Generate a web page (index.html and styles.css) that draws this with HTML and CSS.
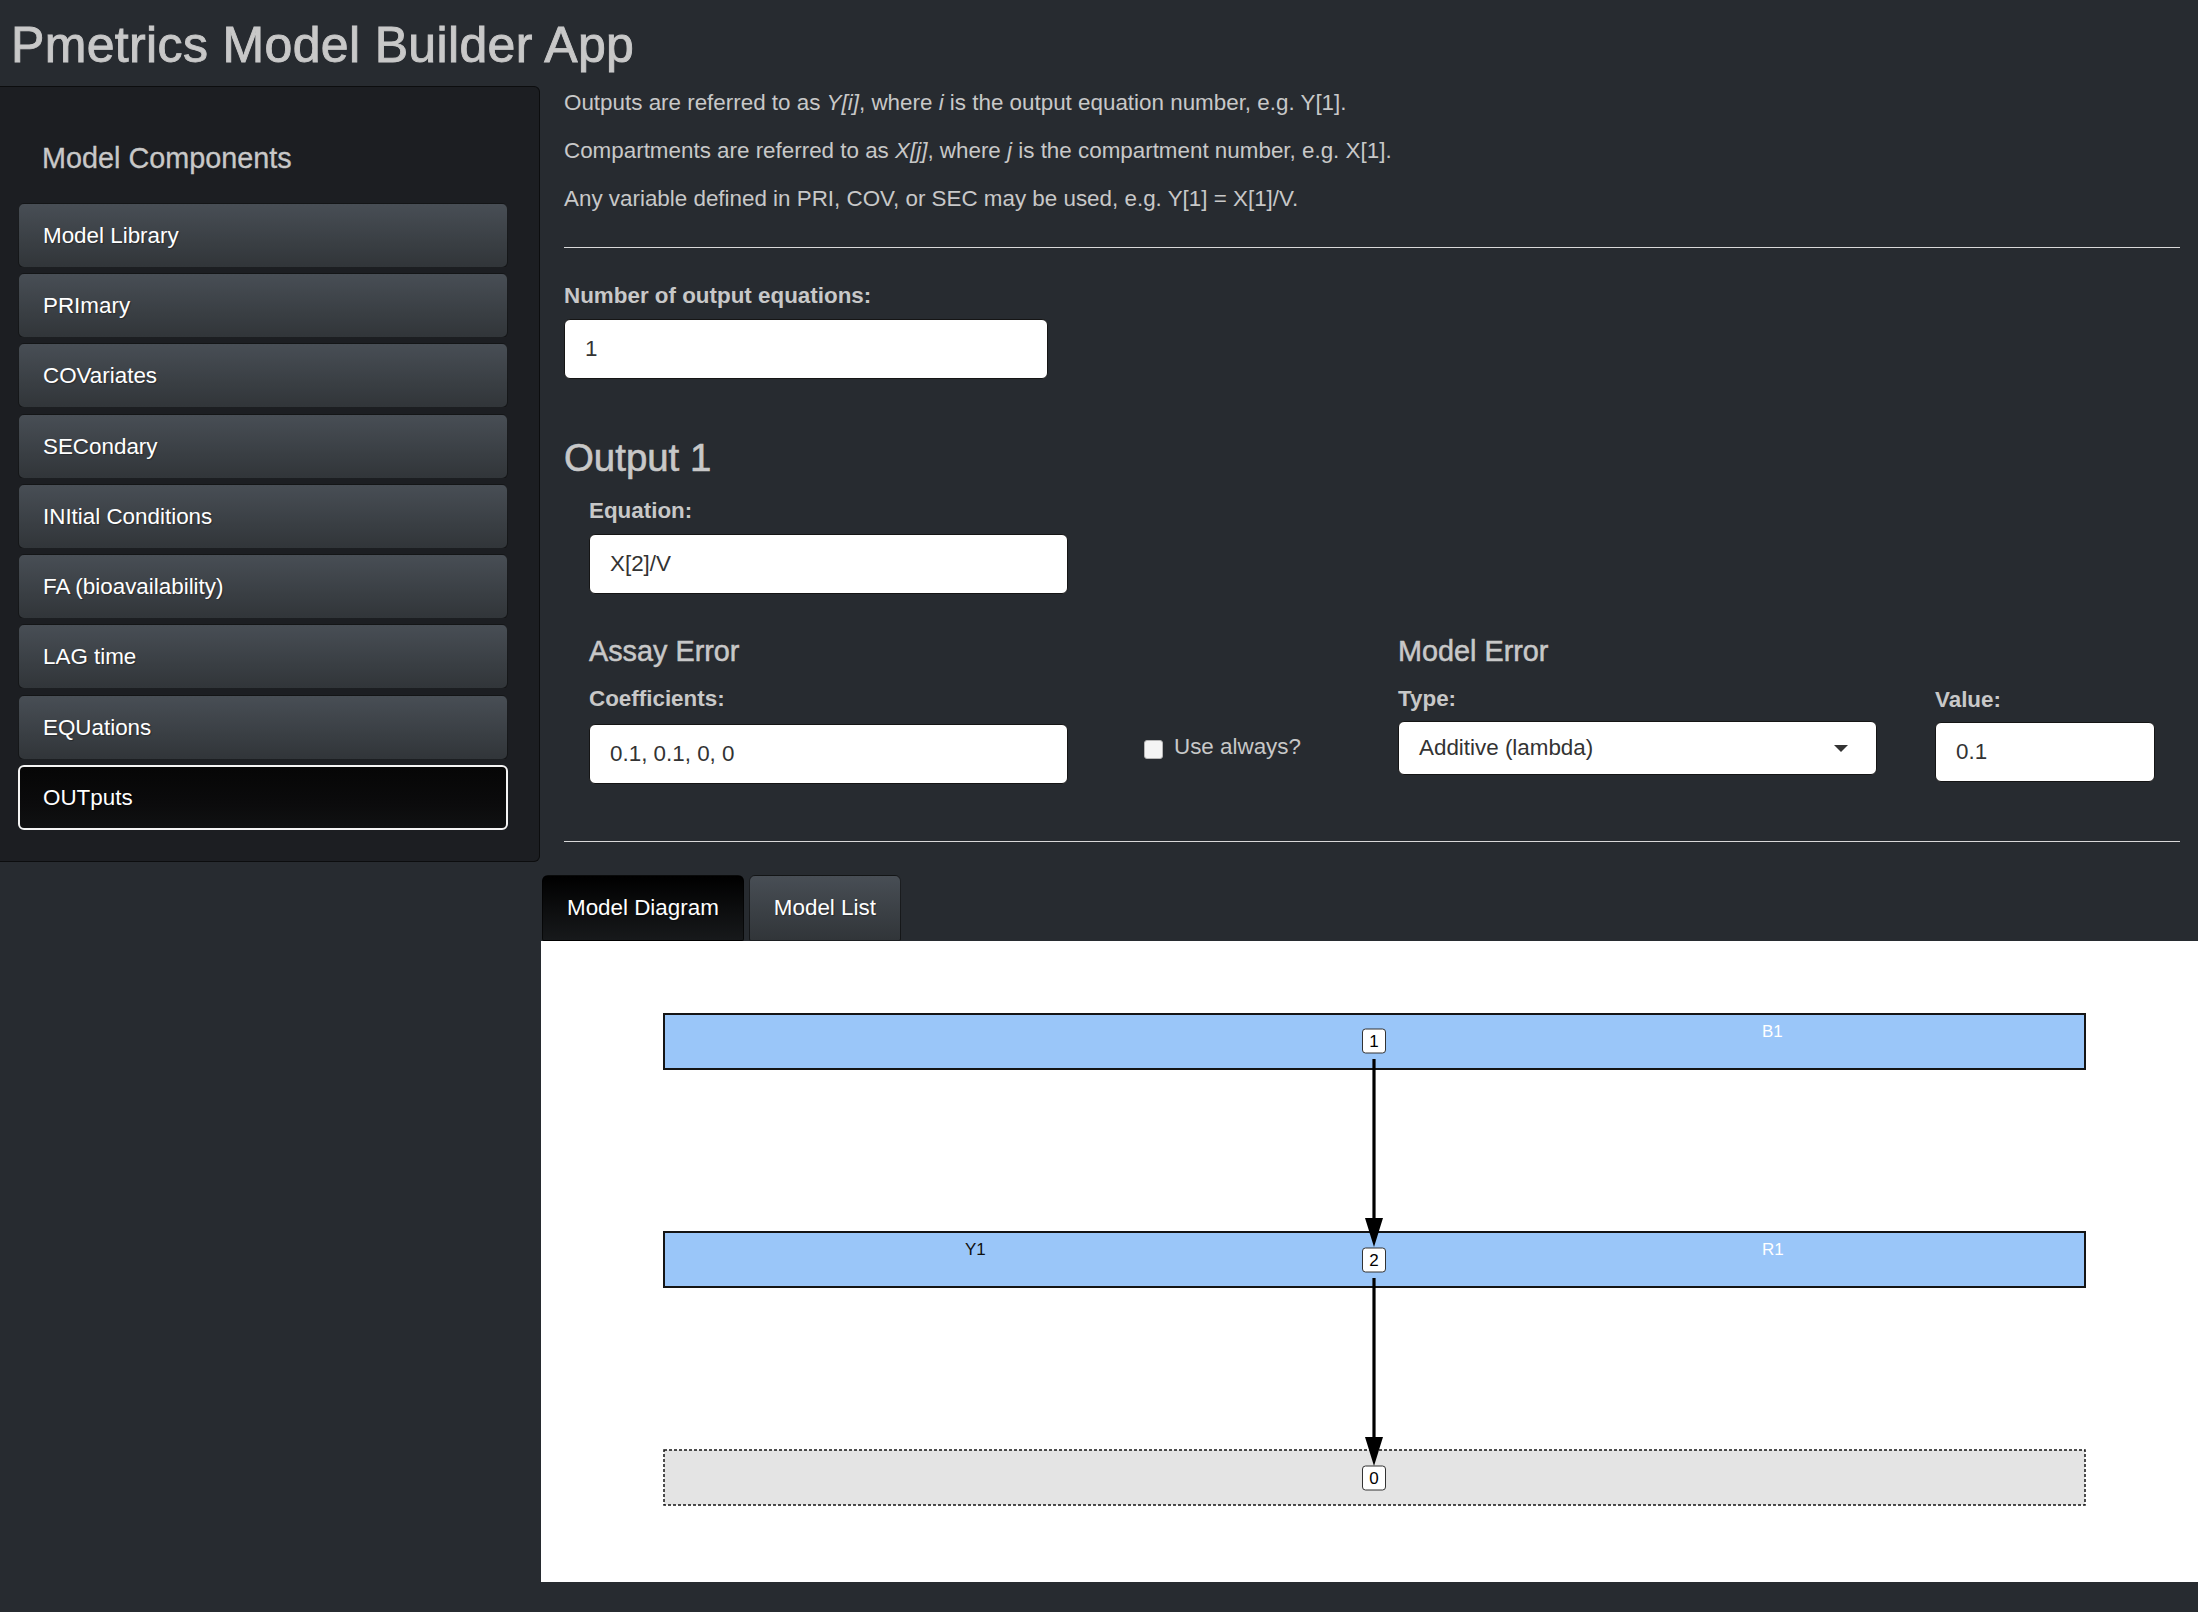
FILE: index.html
```html
<!DOCTYPE html>
<html lang="en">
<head>
<meta charset="utf-8">
<title>Pmetrics Model Builder App</title>
<link rel="stylesheet" href="styles.css">
</head>
<body>
<h1 class="title">Pmetrics Model Builder App</h1>
<div class="layout">
  <aside class="well">
    <h4 class="well-title">Model Components</h4>
    <div class="nav-buttons">
      <div class="btn">Model Library</div>
      <div class="btn">PRImary</div>
      <div class="btn">COVariates</div>
      <div class="btn">SECondary</div>
      <div class="btn">INItial Conditions</div>
      <div class="btn">FA (bioavailability)</div>
      <div class="btn">LAG time</div>
      <div class="btn">EQUations</div>
      <div class="btn btn-active">OUTputs</div>
    </div>
  </aside>
  <main class="main">
    <div class="content">
      <p>Outputs are referred to as <em>Y[i]</em>, where <em>i</em> is the output equation number, e.g. Y[1].</p>
      <p>Compartments are referred to as <em>X[j]</em>, where <em>j</em> is the compartment number, e.g. X[1].</p>
      <p>Any variable defined in PRI, COV, or SEC may be used, e.g. Y[1] = X[1]/V.</p>
      <hr class="hr1">
      <div class="form-group">
        <label class="ctl">Number of output equations:</label>
        <div class="input w-num">1</div>
      </div>
      <h3 class="out-title">Output 1</h3>
      <div class="output">
        <label class="ctl">Equation:</label>
        <div class="input w-eq">X[2]/V</div>
        <div class="error-grid">
          <div class="col">
            <h4 class="sub">Assay Error</h4>
            <label class="ctl ctl-lg">Coefficients:</label>
            <div class="input w-eq">0.1, 0.1, 0, 0</div>
          </div>
          <div class="col check-col">
            <label class="checkbox"><span class="cb"></span>Use always?</label>
          </div>
          <div class="col">
            <h4 class="sub">Model Error</h4>
            <label class="ctl ctl-type">Type:</label>
            <div class="select w-eq"><span>Additive (lambda)</span><span class="caret"></span></div>
          </div>
          <div class="col value-col">
            <label class="ctl ctl-type">Value:</label>
            <div class="input w-val">0.1</div>
          </div>
        </div>
      </div>
      <hr class="hr2">
    </div>
    <div class="tabs">
      <div class="tab-nav">
        <div class="tab tab-active">Model Diagram</div>
        <div class="tab">Model List</div>
      </div>
      <div class="tab-panel">
        <svg class="diagram" width="1657" height="641" viewBox="0 0 1657 641">
          <rect x="123" y="73" width="1421" height="55" fill="#9ac6f9" stroke="#151515" stroke-width="2"/>
          <rect x="123" y="291" width="1421" height="55" fill="#9ac6f9" stroke="#151515" stroke-width="2"/>
          <rect x="123" y="509" width="1421" height="55" fill="#e4e4e4" stroke="#151515" stroke-width="1.5" stroke-dasharray="3 2"/>
          <line x1="833" y1="118" x2="833" y2="280" stroke="#000" stroke-width="3.2"/>
          <polygon points="824,277 842,277 833,306" fill="#000"/>
          <line x1="833" y1="337" x2="833" y2="499" stroke="#000" stroke-width="3.2"/>
          <polygon points="824,496 842,496 833,525" fill="#000"/>
          <rect x="821.5" y="88" width="23" height="24" rx="3" fill="#fff" stroke="#333" stroke-width="1"/>
          <rect x="821.5" y="307" width="23" height="24" rx="3" fill="#fff" stroke="#333" stroke-width="1"/>
          <rect x="821.5" y="525" width="23" height="24" rx="3" fill="#fff" stroke="#333" stroke-width="1"/>
          <text class="num" x="833" y="106">1</text>
          <text class="num" x="833" y="325">2</text>
          <text class="num" x="833" y="543">0</text>
          <text class="lbl lbl-w" x="1221" y="96">B1</text>
          <text class="lbl lbl-k" x="424" y="314">Y1</text>
          <text class="lbl lbl-w" x="1221" y="314">R1</text>
        </svg>
      </div>
    </div>
  </main>
</div>
</body>
</html>
```

FILE: styles.css
```css
html, body {
  margin: 0;
  background: #272b30;
}

body {
  color: #c8c8c8;
  font-family: "Liberation Sans", Arial, Helvetica, sans-serif;
  font-size: 22.4px;
  line-height: 32px;
}

.title {
  margin: 0;
  height: 86px;
  box-sizing: border-box;
  padding: 19px 0 0 11px;
  font-size: 50px;
  line-height: 52px;
  font-weight: 400;
  letter-spacing: 0.35px;
  color: #c8c8c8;
  -webkit-text-stroke: 0.9px #c8c8c8;
}

.layout {
  display: flex;
  align-items: flex-start;
}

.well {
  width: 540px;
  flex: none;
  box-sizing: border-box;
  background: #1c1e22;
  border: 1px solid #0c0d0e;
  border-left: 0;
  border-radius: 0 6px 6px 0;
  padding: 0 31px 31px 18px;
}

.well-title {
  margin: 54.6px 0 29.4px 24px;
  font-size: 28.8px;
  line-height: 32px;
  font-weight: 400;
  color: #c8c8c8;
  -webkit-text-stroke: 0.3px #c8c8c8;
}

.nav-buttons {
  display: flex;
  flex-direction: column;
  gap: 5.25px;
}

.btn {
  height: 65px;
  box-sizing: border-box;
  padding: 0 24px;
  line-height: 63px;
  color: #fff;
  background-image: linear-gradient(#484e55, #3a3f44 60%, #313539);
  border: 1px solid rgba(0, 0, 0, 0.6);
  border-radius: 6px;
  text-shadow: 1px 1px 1px rgba(0, 0, 0, 0.3);
}

.btn-active {
  background-image: linear-gradient(#060606, #0b0b0c 60%, #101112);
  border: 2px solid #f4f4f4;
  padding: 0 23px;
  line-height: 61px;
}

.main {
  flex: 1;
  min-width: 0;
  margin-left: 1px;
}

.content {
  display: flex;
  flex-direction: column;
  padding: 1px 18px 0 23px;
}

p {
  margin: 0 0 16px;
}

hr {
  border: 0;
  border-top: 1px solid #d9d9d9;
  width: 100%;
}

.hr1 {
  margin: 16px 0 32px;
}

.hr2 {
  margin: 56.7px 0 33px;
}

.ctl {
  display: block;
  font-weight: 700;
  margin-bottom: 7px;
}

.ctl-lg {
  margin-bottom: 9px;
}

.ctl-type {
  margin-top: 3px;
  margin-bottom: 6px;
}

.input {
  box-sizing: border-box;
  height: 60px;
  background: #fff;
  border: 1px solid #151515;
  border-radius: 6px;
  padding: 0 20px;
  line-height: 58px;
  color: #333;
}

.w-num {
  width: 484px;
}

.w-eq {
  width: 479px;
}

.w-val {
  width: 220px;
}

.out-title {
  margin: 57.6px 0 16px;
  font-size: 38.4px;
  line-height: 42px;
  font-weight: 400;
  color: #c8c8c8;
  -webkit-text-stroke: 0.6px #c8c8c8;
}

.output {
  padding-left: 25px;
}

.error-grid {
  display: grid;
  grid-template-columns: 555px 254px 537px 220px;
  margin-top: 26px;
}

.sub {
  margin: 16px 0;
  font-size: 28.8px;
  line-height: 31.7px;
  font-weight: 400;
  color: #c8c8c8;
  -webkit-text-stroke: 0.5px #c8c8c8;
}

.check-col {
  padding-top: 111.4px;
}

.checkbox {
  display: flex;
  align-items: flex-start;
}

.cb {
  width: 19px;
  height: 19px;
  box-sizing: border-box;
  margin: 9px 11px 0 0;
  background: #f4f4f4;
  border: 1px solid #b5b5b5;
  border-radius: 3px;
}

.value-col {
  padding-top: 61px;
}

.value-col .input {
  margin-top: 2px;
}

.select {
  display: flex;
  align-items: center;
  justify-content: space-between;
  box-sizing: border-box;
  height: 54px;
  background: #fff;
  border: 1px solid #151515;
  border-radius: 6px;
  padding: 0 28px 0 20px;
  color: #333;
}

.caret {
  width: 0;
  height: 0;
  border-left: 7px solid transparent;
  border-right: 7px solid transparent;
  border-top: 7px solid #333;
}

.tab-nav {
  display: flex;
  gap: 5px;
  padding-left: 1px;
}

.tab {
  height: 66px;
  box-sizing: border-box;
  padding: 0 24px;
  line-height: 64px;
  color: #fff;
  background-image: linear-gradient(#484e55, #3a3f44 60%, #313539);
  border: 1px solid rgba(0, 0, 0, 0.6);
  border-radius: 6px 6px 2px 2px;
  text-shadow: 1px 1px 1px rgba(0, 0, 0, 0.3);
}

.tab-active {
  background-image: linear-gradient(#000, #0c0d0e 50%, #17191b);
}

.tab-panel {
  background: #fff;
  height: 641px;
}

.diagram {
  display: block;
}

.num {
  font-family: "Liberation Sans", Arial, sans-serif;
  font-size: 17px;
  text-anchor: middle;
  fill: #000;
}

.lbl {
  font-family: "Liberation Sans", Arial, sans-serif;
  font-size: 17px;
}

.lbl-w {
  fill: #fff;
}

.lbl-k {
  fill: #111;
}
```
